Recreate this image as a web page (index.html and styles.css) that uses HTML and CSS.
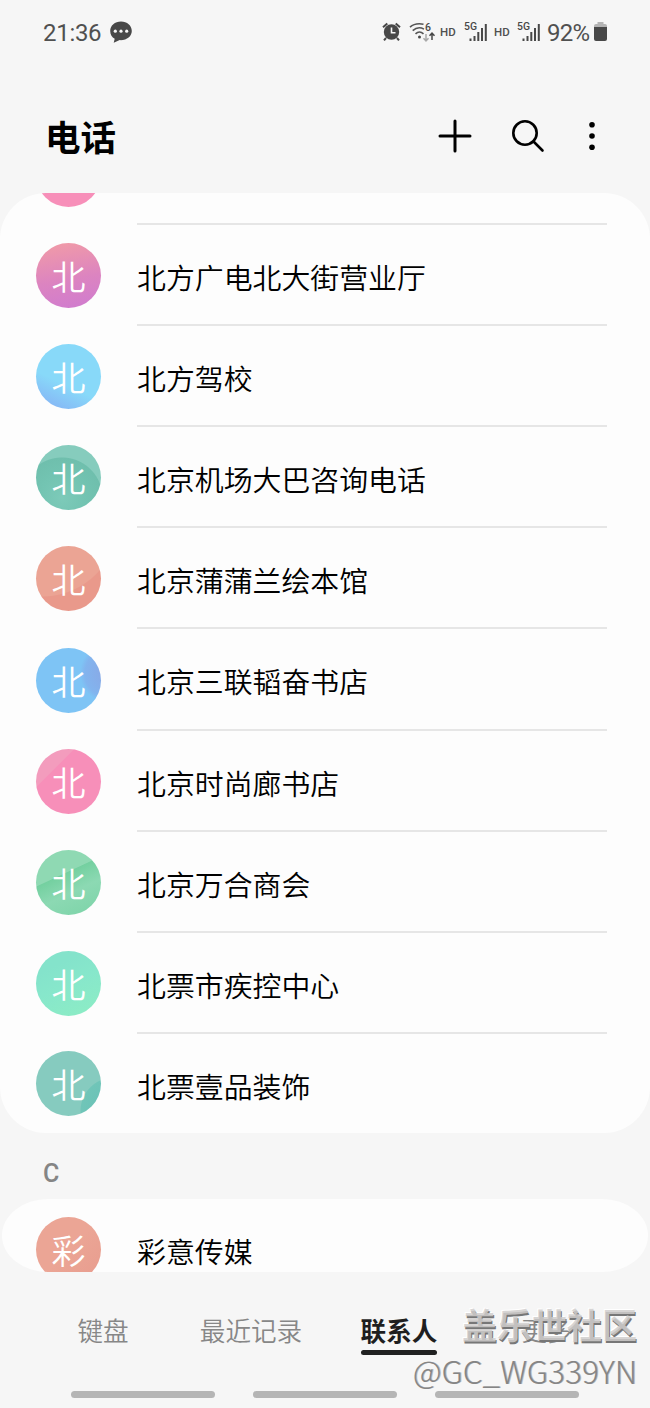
FILE: index.html
```html
<!DOCTYPE html>
<html lang="zh-CN">
  <head>
    <meta charset="UTF-8" />
    <meta name="viewport" content="width=device-width, initial-scale=1.0" />
    <title>电话</title>
    <link rel="stylesheet" href="styles.css">
  </head>
  <body>
    <div class="status-bar">
      <span class="time">21:36</span>
      <svg class="chat" width="24" height="24" viewBox="0 0 24 24">
        <path d="M12 1.6C5.9 1.6 1.2 5.6 1.2 11c0 3.600 1.800 6.200 4.500 7.800L4.700 22.800l6-2.700c7 .4 12.100-3.700 12.100-9.100 0-5.400-4.700-9.400-10.800-9.400z" fill="#484848" />
        <circle cx="6.300" cy="11.200" r="1.600" fill="#f6f6f6" />
        <circle cx="12" cy="11.200" r="1.600" fill="#f6f6f6" />
        <circle cx="17.700" cy="11.200" r="1.600" fill="#f6f6f6" />
      </svg>
      <svg class="alarm" width="19" height="20" viewBox="0 0 19 20">
        <circle cx="9.500" cy="10" r="7.700" fill="#484848" />
        <path d="M1 5.300 5.300 1.500M18 5.300l-4.300-3.800M4 16l-2 2.300M15 16l2 2.300" stroke="#484848" stroke-width="2" fill="none" />
        <path d="M9.500 5.500v5.200h4" stroke="#f6f6f6" stroke-width="1.600" fill="none" />
      </svg>
      <svg class="wifi" width="27" height="22" viewBox="0 0 27 22">
        <g fill="none" stroke="#555" stroke-width="1.600">
          <path d="M1 6.200C4 3.400 8 2 14.500 3.200" />
          <path d="M3.700 9.600c3.300-3 7.500-3.600 11.300-1.500" />
          <path d="M6.500 12.800c2.400-2.200 5.600-2.200 8 0" />
        </g>
        <circle cx="10.500" cy="16" r="1.500" fill="#484848" />
        <text x="16" y="10.200" class="tiny">6</text>
        <path d="M17 13v6.500M14.500 17.200l2.500 2.600 2.500-2.600" stroke="#a8a8a8" stroke-width="1.500" fill="none" />
        <path d="M23 19v-6.500M20.500 14.800l2.500-2.600 2.500 2.600" stroke="#484848" stroke-width="1.500" fill="none" />
      </svg>
      <span class="hd">HD</span>
      <svg class="signal" width="24" height="22" viewBox="0 0 24 22">
        <text x="0" y="9" class="tiny" textLength="13" lengthAdjust="spacingAndGlyphs">5G</text>
        <path d="M6.500 17.500V20M10.500 15v5M14.300 11v9M18 7v13M21.800 3v17" stroke="#484848" stroke-width="2" />
      </svg>
      <span class="hd">HD</span>
      <svg class="signal" width="24" height="22" viewBox="0 0 24 22">
        <text x="0" y="9" class="tiny" textLength="13" lengthAdjust="spacingAndGlyphs">5G</text>
        <path d="M6.500 17.500V20M10.500 15v5M14.300 11v9M18 7v13M21.800 3v17" stroke="#484848" stroke-width="2" />
      </svg>
      <span class="percent">92%</span>
      <svg class="battery" width="13" height="20" viewBox="0 0 13 20">
        <path d="M3.500 0h6v2H11q2 0 2 2v1.500H0V4q0-2 2-2h1.500z" fill="#b4b4b4" />
        <path d="M0 5h13v12q0 2-2 2H2q-2 0-2-2z" fill="#484848" />
      </svg>
    </div>

    <header class="header">
      <h1>电话</h1>
      <svg class="add" width="34" height="34" viewBox="0 0 34 34">
        <path d="M17 2v30M2 17h30" />
      </svg>
      <svg class="search" width="34" height="34" viewBox="0 0 34 34">
        <circle cx="14" cy="14" r="11.700" />
        <path d="M22.500 22.500 31.500 31.500" />
      </svg>
      <svg class="more" width="8" height="30" viewBox="0 0 8 30">
        <circle cx="4" cy="3.700" r="2.800" />
        <circle cx="4" cy="15" r="2.800" />
        <circle cx="4" cy="26.300" r="2.800" />
      </svg>
    </header>

    <main class="contacts">
      <section class="card card-b">
        <div class="row row-cut">
          <div class="avatar pink-flat"></div>
          <div class="name"></div>
        </div>
        <div class="row">
          <div class="avatar orchid">北</div>
          <div class="name">北方广电北大街营业厅</div>
        </div>
        <div class="row">
          <div class="avatar sky">北</div>
          <div class="name">北方驾校</div>
        </div>
        <div class="row">
          <div class="avatar teal">北</div>
          <div class="name">北京机场大巴咨询电话</div>
        </div>
        <div class="row">
          <div class="avatar salmon">北</div>
          <div class="name">北京蒲蒲兰绘本馆</div>
        </div>
        <div class="row">
          <div class="avatar blue">北</div>
          <div class="name">北京三联韬奋书店</div>
        </div>
        <div class="row">
          <div class="avatar pink">北</div>
          <div class="name">北京时尚廊书店</div>
        </div>
        <div class="row">
          <div class="avatar green">北</div>
          <div class="name">北京万合商会</div>
        </div>
        <div class="row">
          <div class="avatar mint">北</div>
          <div class="name">北票市疾控中心</div>
        </div>
        <div class="row row-last">
          <div class="avatar teal-corner">北</div>
          <div class="name">北票壹品装饰</div>
        </div>
      </section>

      <h2 class="letter">C</h2>

      <section class="card card-c">
        <div class="row">
          <div class="avatar salmon-light">彩</div>
          <div class="name">彩意传媒</div>
        </div>
      </section>
    </main>

    <nav class="tabs">
      <div class="tab"><span>键盘</span></div>
      <div class="tab"><span>最近记录</span></div>
      <div class="tab active"><span>联系人</span></div>
      <div class="tab"><span>更多</span></div>
    </nav>

    <div class="gesture-bars">
      <i></i>
      <i></i>
      <i></i>
    </div>

    <div class="watermark">
      <div class="site">盖乐世社区</div>
      <div class="user">@GC_WG339YN</div>
    </div>
  </body>
</html>
```
FILE: styles.css
```css
* {
  box-sizing: border-box;
}

body {
  margin: 0;
  width: 650px;
  height: 1408px;
  position: relative;
  overflow: hidden;
  background-color: #f6f6f6;
  color: #000;
  font-family: Roboto, "Noto Sans CJK SC", sans-serif;
}

svg {
  display: block;
  flex: none;
}

/* Status bar */

.status-bar {
  display: flex;
  align-items: center;
  height: 64px;
  padding-left: 43px;
  color: #505050;
}

.time {
  width: 66px;
  padding-top: 1px;
  font-size: 24px;
  letter-spacing: -0.3px;
}

.alarm {
  margin-left: 249px;
}

.wifi {
  margin-left: 8px;
}

.hd {
  width: 28px;
  padding-left: 4px;
  font-size: 11.5px;
  font-weight: 500;
}

.signal {
  margin-right: 6px;
}

.signal + .hd {
  width: 23px;
  padding-left: 0;
}

.tiny {
  font-size: 10.5px;
  font-weight: 500;
  fill: #484848;
}

.percent {
  width: 47px;
  padding-top: 1px;
  font-size: 24px;
  letter-spacing: -0.8px;
}

/* Header */

.header {
  display: flex;
  align-items: center;
  height: 129px;
  padding: 14px 0 0 45px;
}

h1 {
  width: 393px;
  margin: 0;
  padding-top: 6px;
  font-size: 35.5px;
  font-weight: 700;
  line-height: 50px;
}

.add,
.search {
  fill: none;
  stroke: #000;
  stroke-width: 3;
  stroke-linecap: round;
}

.search {
  margin-left: 39px;
  stroke-width: 2.6;
}

.more {
  margin-left: 43px;
}

/* Contact list */

.card {
  overflow: hidden;
  background-color: #fdfdfd;
}

.card-b {
  height: 940px;
  border-radius: 46px;
}

.card-c {
  height: 73px;
  margin: 0 2px;
  border-radius: 46px / 36.5px;
}

.row {
  display: flex;
  align-items: center;
  height: 101.1px;
  padding-left: 36px;
}

.row-cut {
  margin-top: -69px;
}

.row-last {
  height: 99px;
}

.avatar {
  flex: none;
  width: 65px;
  height: 65px;
  margin-right: 36px;
  border-radius: 50%;
  color: #fff;
  font-size: 34px;
  font-weight: 350;
  line-height: 71px;
  text-align: center;
}

.name {
  width: 470px;
  height: 100%;
  padding-top: 5px;
  border-bottom: 2px solid #e6e6e6;
  font-size: 28.9px;
  font-weight: 350;
  line-height: 98px;
  white-space: nowrap;
}

.row-last .name,
.card-c .name {
  border-bottom: none;
}

.card-c .row {
  padding-left: 34px;
}

.orchid {
  background: linear-gradient(170deg, #f09aa8 5%, #dc84c0 55%, #cf7bd0);
}

.sky {
  background: linear-gradient(205deg, #88d9f9 60%, #86bdf6 85%, #8ab0f3);
}

.teal {
  background: radial-gradient(circle at 26px 53px, #7dcab9 0, #73c4b2 22px, #6fbfad 40px, #86ccbd 41px);
}

.salmon {
  background: radial-gradient(circle at 6px -26px, #eba494 0, #eba494 76px, #e9998b 77px);
}

.blue {
  background: radial-gradient(circle at 74px 25px, #8ba5e3 0, #82b4ee 25px, #7ec4f5 30px);
}

.pink-flat {
  background-color: #f78fb9;
}

.pink {
  background: linear-gradient(135deg, #f39cbd 29%, #f78fb9 30%);
}

.green {
  background: linear-gradient(155deg, #8fd9b3 38%, #74d0a0 39%, #8cd9b3 62%, #7bd3a7);
}

.mint {
  background: linear-gradient(155deg, #84e3cb 25%, #87e7cb 50%, #8dedc4);
}

.teal-corner {
  background: radial-gradient(circle at 78px 60px, #66c0b6 0, #70c5b8 33px, #86cbbf 34px);
}

.salmon-light {
  background: linear-gradient(135deg, #eba595 50%, #e89c8e);
}

.letter {
  height: 66px;
  margin: 0;
  padding: 7px 0 0 43px;
  color: #858585;
  font-size: 25px;
  font-weight: 500;
  line-height: 68px;
}

/* Bottom tabs */

.tabs {
  display: grid;
  grid-template-columns: repeat(4, 148px);
  height: 119px;
  padding: 38px 29px 0;
}

.tab {
  color: #878787;
  font-size: 25.6px;
  font-weight: 350;
  line-height: 45px;
  text-align: center;
}

.tab span {
  position: relative;
  display: inline-block;
  height: 45px;
}

.tab.active {
  color: #1f1f1f;
  font-weight: 700;
}

.tab.active span::after {
  content: "";
  position: absolute;
  left: 0;
  right: 0;
  bottom: 0;
  height: 5px;
  border-radius: 2.5px;
  background-color: #202121;
}

.gesture-bars {
  display: flex;
  gap: 38px;
  padding-left: 71px;
}

.gesture-bars i {
  width: 144px;
  height: 7px;
  border-radius: 4px;
  background-color: #b5b5b5;
}

/* Forum watermark over the tabs */

.watermark {
  position: absolute;
  right: 13px;
  bottom: 18px;
  text-align: right;
  white-space: nowrap;
}

.site {
  color: rgba(208, 206, 205, 0.85);
  font-size: 35px;
  font-weight: 700;
  line-height: 44px;
  text-shadow: 1px 2px 0 #777, -1px -1px 0 #fff;
}

.user {
  color: #858585;
  font-family: "Noto Sans CJK SC", sans-serif;
  font-size: 31.6px;
  font-weight: 300;
  line-height: 40px;
  text-shadow: 1px 0 0 #bbb;
}
```
